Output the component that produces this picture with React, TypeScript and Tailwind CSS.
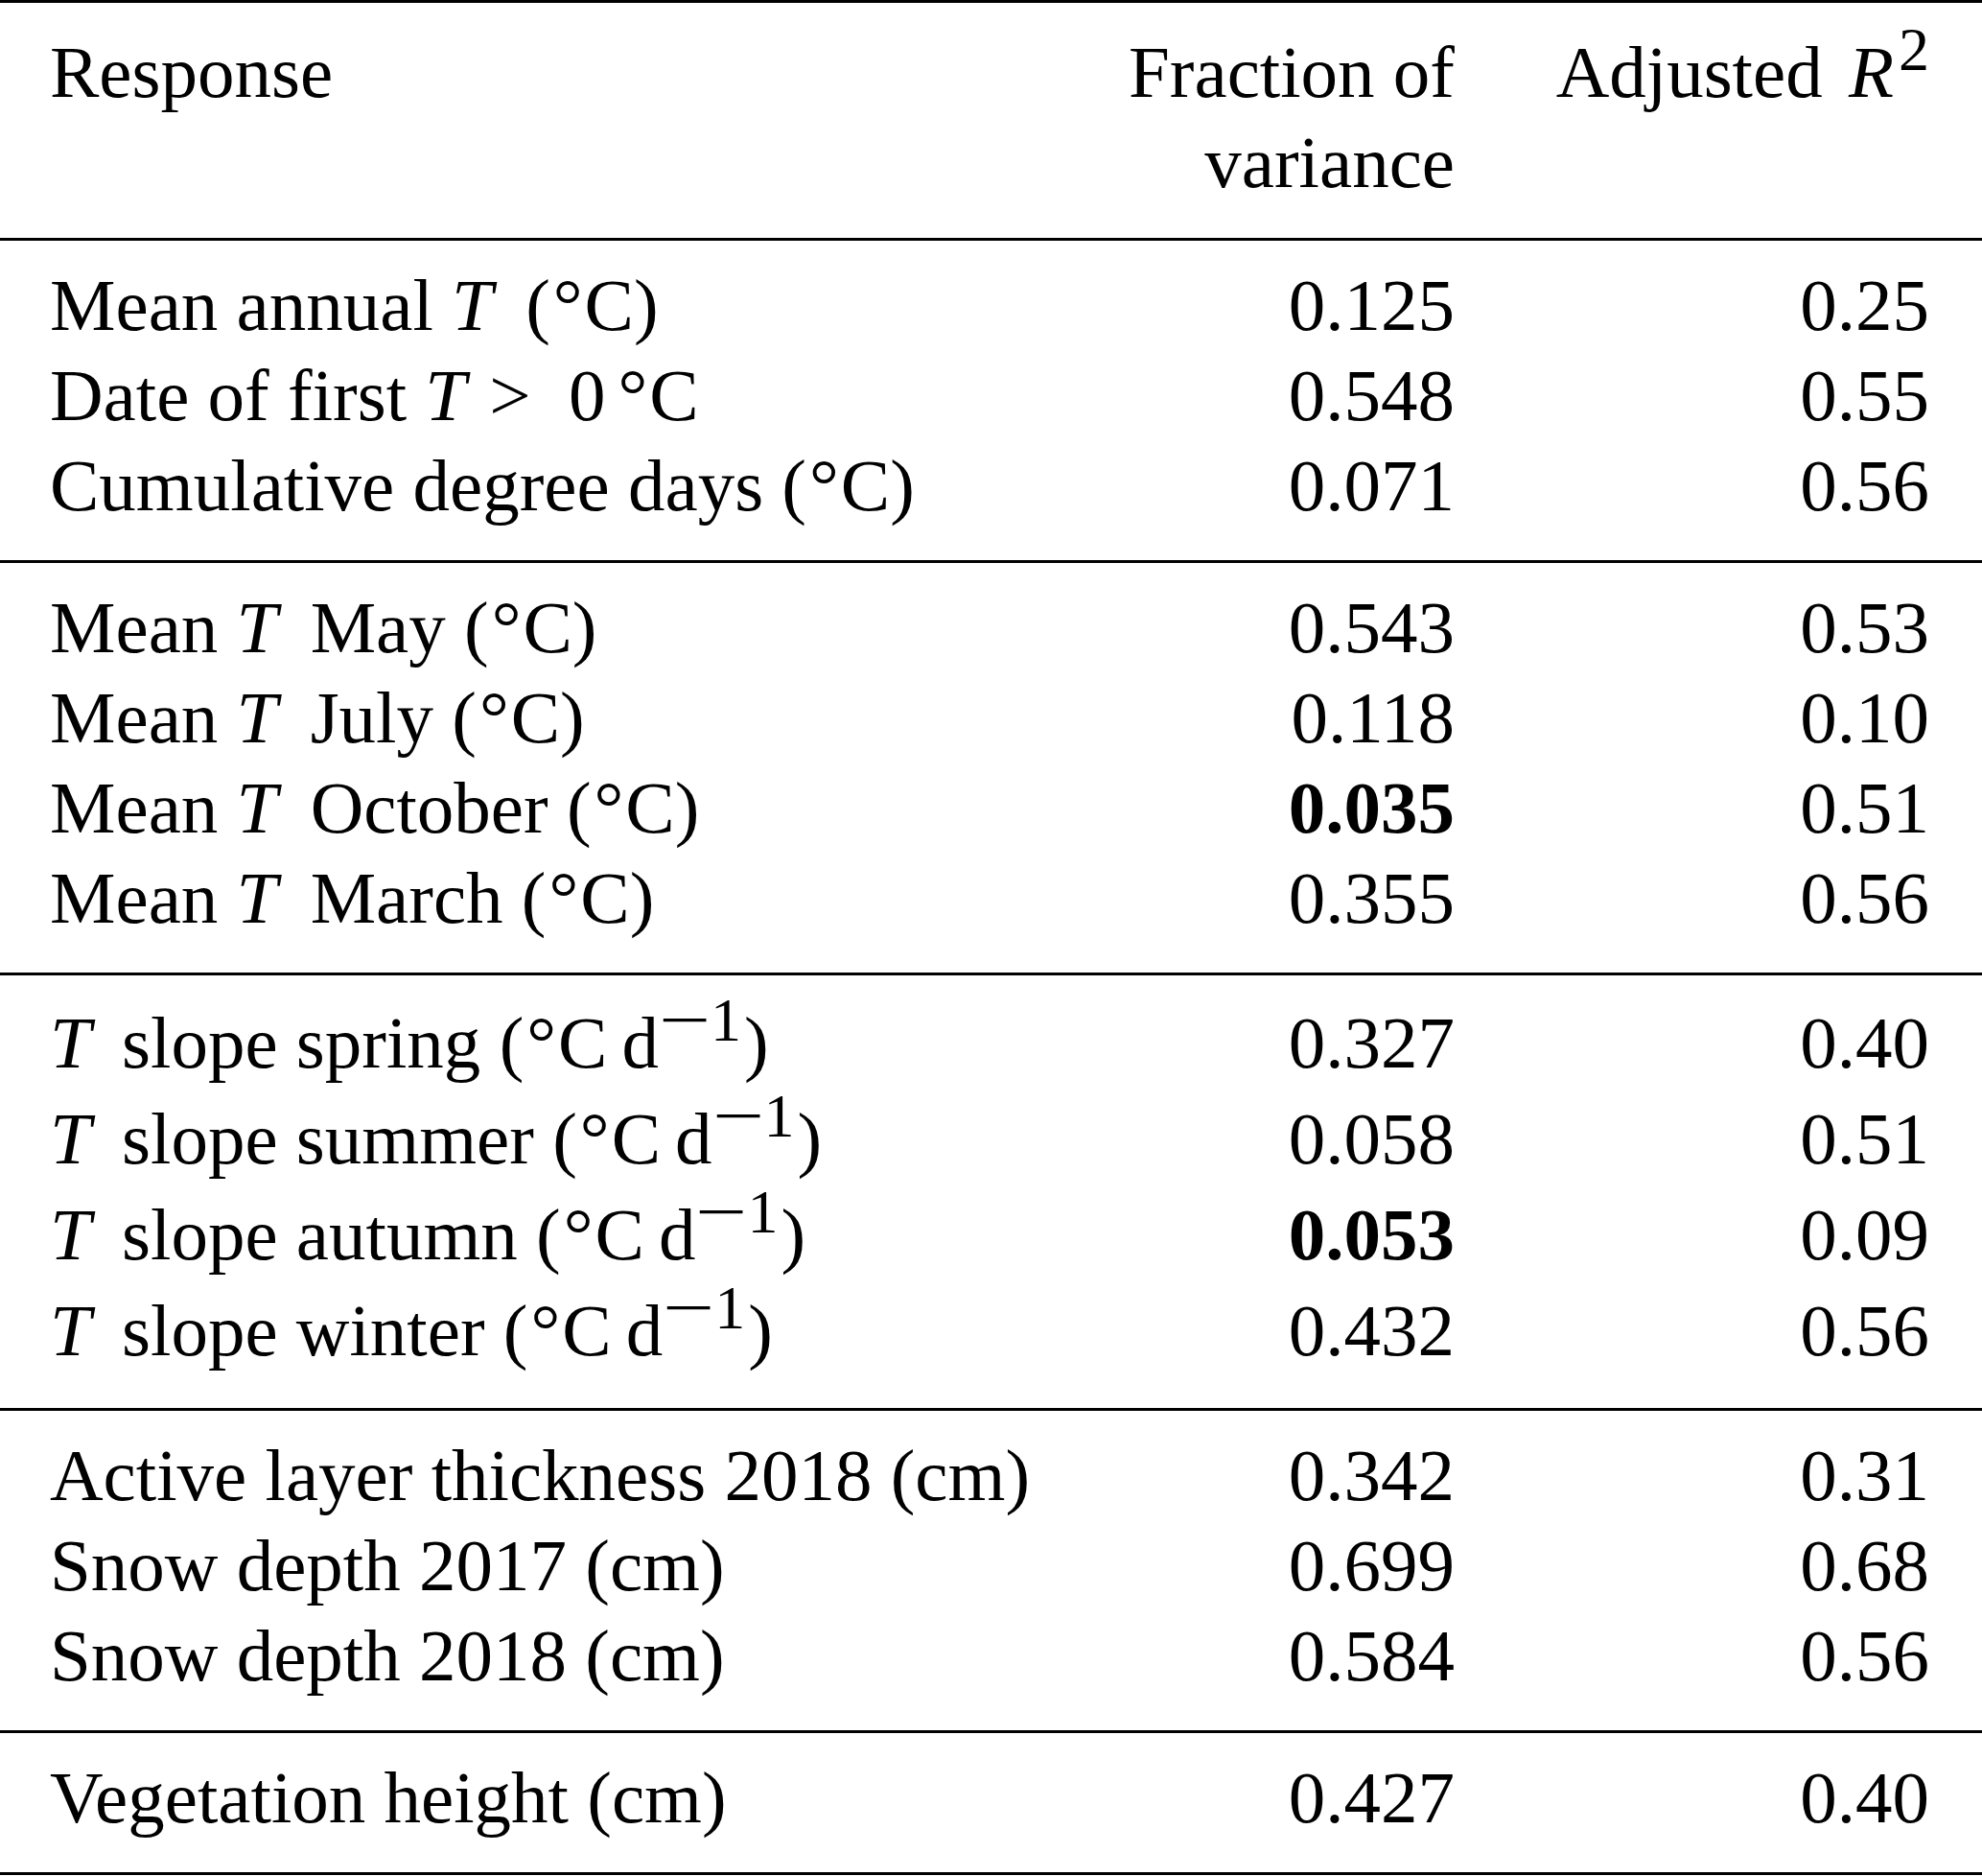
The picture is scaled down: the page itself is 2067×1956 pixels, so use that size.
import React from "react";

const T = ({ mr }: { mr: "a" | "b" | "c" }) => (
  <i className={mr === "a" ? "italic mr-[15px]" : mr === "b" ? "italic mr-[13px]" : "italic mr-[5px]"}>T</i>
);
const Sup = ({ children }: { children: React.ReactNode }) => (
  <span className="relative -top-[28px] text-[64px] leading-none">{children}</span>
);
const Deg = () => <span className="ml-[3px] mr-[2px]">°</span>;
const DegC = () => (
  <>
    <Deg />C
  </>
);
const PerDay = () => (
  <>
    (<DegC />
    <span className="inline-block w-[15px]" />d
    <Sup>
      <span className="inline-block mx-[9px] scale-x-150">−</span>1
    </Sup>
    <span className="inline-block w-[3px]" />)
  </>
);

type RowProps = { label: React.ReactNode; a: string; b: string; bold?: boolean; tall?: boolean };

const Row = ({ label, a, b, bold, tall }: RowProps) => (
  <div className={tall ? "flex h-[100px] leading-[100px]" : "flex h-[94px] leading-[94px]"}>
    <div className="flex-1 whitespace-nowrap">{label}</div>
    <div className={bold ? "w-[400px] text-right font-bold" : "w-[400px] text-right"}>{a}</div>
    <div className="w-[495px] text-right">{b}</div>
  </div>
);

const Group = ({ children }: { children: React.ReactNode }) => (
  <div className="pl-[52px] pr-[55px] pt-[20px] pb-[31px] border-b-[3px] border-black">{children}</div>
);

export default function App() {
  return (
    <div
      className="w-[2067px] h-[1956px] bg-white text-black text-[77px]"
      style={{ fontFamily: '"Liberation Serif", "Times New Roman", serif' }}
    >
      <div className="border-t-[3px] border-black" />
      <div className="flex pl-[52px] pr-[55px] pt-[25px] pb-[32px] border-b-[3px] border-black leading-[94px]">
        <div className="flex-1">Response</div>
        <div className="w-[400px] text-right">
          <div>Fraction of</div>
          <div>variance</div>
        </div>
        <div className="w-[495px] text-right whitespace-nowrap">
          Adjusted <i className="ml-[8px] mr-[5px]">R</i>
          <Sup>2</Sup>
        </div>
      </div>

      <Group>
        <Row label={<>Mean annual <T mr="a" /> (<DegC />)</>} a="0.125" b="0.25" />
        <Row
          label={
            <>
              Date of first <T mr="c" /> <span className="mr-[20px]">&gt;</span> 0
              <span className="inline-block w-[10px]" />
              <DegC />
            </>
          }
          a="0.548"
          b="0.55"
        />
        <Row label={<>Cumulative degree days (<DegC />)</>} a="0.071" b="0.56" />
      </Group>

      <Group>
        <Row label={<>Mean <T mr="a" /> May (<DegC />)</>} a="0.543" b="0.53" />
        <Row label={<>Mean <T mr="a" /> July (<DegC />)</>} a="0.118" b="0.10" />
        <Row label={<>Mean <T mr="a" /> October (<DegC />)</>} a="0.035" b="0.51" bold />
        <Row label={<>Mean <T mr="a" /> March (<DegC />)</>} a="0.355" b="0.56" />
      </Group>

      <Group>
        <Row tall label={<><T mr="b" /> slope spring <PerDay /></>} a="0.327" b="0.40" />
        <Row tall label={<><T mr="b" /> slope summer <PerDay /></>} a="0.058" b="0.51" />
        <Row tall label={<><T mr="b" /> slope autumn <PerDay /></>} a="0.053" b="0.09" bold />
        <Row tall label={<><T mr="b" /> slope winter <PerDay /></>} a="0.432" b="0.56" />
      </Group>

      <Group>
        <Row label="Active layer thickness 2018 (cm)" a="0.342" b="0.31" />
        <Row label="Snow depth 2017 (cm)" a="0.699" b="0.68" />
        <Row label="Snow depth 2018 (cm)" a="0.584" b="0.56" />
      </Group>

      <Group>
        <Row label="Vegetation height (cm)" a="0.427" b="0.40" />
      </Group>
    </div>
  );
}
